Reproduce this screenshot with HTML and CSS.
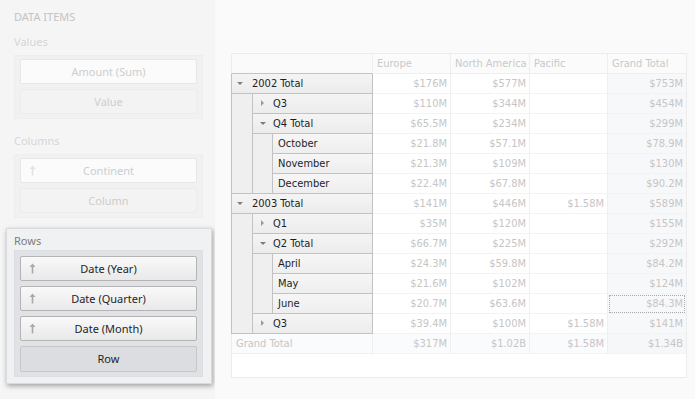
FILE: index.html
```html
<!DOCTYPE html>
<html lang="en">
  <head>
    <meta charset="UTF-8" />
    <title>Pivot - Data Items</title>
    <link rel="stylesheet" href="styles.css">
  </head>
  <body>
    <div class="app">
      <aside class="items-pane">
        <div class="pane-title">DATA ITEMS</div>

        <div class="section">
          <div class="section-label">Values</div>
          <div class="well">
            <div class="item">Amount (Sum)</div>
            <div class="item placeholder">Value</div>
          </div>
        </div>

        <div class="section">
          <div class="section-label">Columns</div>
          <div class="well">
            <div class="item"><span class="sort-icon"><svg width="7" height="11" viewBox="0 0 7 11"><path d="M3.5 0.5 L6.5 4 H4.3 V10.5 H2.7 V4 H0.5 Z" fill="currentColor"/></svg></span>Continent</div>
            <div class="item placeholder">Column</div>
          </div>
        </div>

        <div class="section active">
          <div class="section-label">Rows</div>
          <div class="well">
            <div class="item"><span class="sort-icon"><svg width="7" height="11" viewBox="0 0 7 11"><path d="M3.5 0.5 L6.5 4 H4.3 V10.5 H2.7 V4 H0.5 Z" fill="currentColor"/></svg></span>Date (Year)</div>
            <div class="item"><span class="sort-icon"><svg width="7" height="11" viewBox="0 0 7 11"><path d="M3.5 0.5 L6.5 4 H4.3 V10.5 H2.7 V4 H0.5 Z" fill="currentColor"/></svg></span>Date (Quarter)</div>
            <div class="item"><span class="sort-icon"><svg width="7" height="11" viewBox="0 0 7 11"><path d="M3.5 0.5 L6.5 4 H4.3 V10.5 H2.7 V4 H0.5 Z" fill="currentColor"/></svg></span>Date (Month)</div>
            <div class="item placeholder">Row</div>
          </div>
        </div>
      </aside>

      <main class="grid-area">
        <div class="pivot">
          <div class="row head">
            <div class="corner"></div>
            <div class="col-head">Europe</div>
            <div class="col-head">North America</div>
            <div class="col-head">Pacific</div>
            <div class="col-head total">Grand Total</div>
          </div>

          <!-- 2002 -->
          <div class="row">
            <div class="rh"><span class="lbl"><span class="toggle open"></span>2002 Total</span></div>
            <div class="cell">$176M</div><div class="cell">$577M</div><div class="cell"></div><div class="cell total">$753M</div>
          </div>
          <div class="row">
            <div class="rh"><span class="ind"></span><span class="lbl sub"><span class="toggle shut"></span>Q3</span></div>
            <div class="cell">$110M</div><div class="cell">$344M</div><div class="cell"></div><div class="cell total">$454M</div>
          </div>
          <div class="row">
            <div class="rh"><span class="ind"></span><span class="lbl sub"><span class="toggle open"></span>Q4 Total</span></div>
            <div class="cell">$65.5M</div><div class="cell">$234M</div><div class="cell"></div><div class="cell total">$299M</div>
          </div>
          <div class="row">
            <div class="rh"><span class="ind"></span><span class="ind sub"></span><span class="lbl leaf">October</span></div>
            <div class="cell">$21.8M</div><div class="cell">$57.1M</div><div class="cell"></div><div class="cell total">$78.9M</div>
          </div>
          <div class="row">
            <div class="rh"><span class="ind"></span><span class="ind sub"></span><span class="lbl leaf">November</span></div>
            <div class="cell">$21.3M</div><div class="cell">$109M</div><div class="cell"></div><div class="cell total">$130M</div>
          </div>
          <div class="row">
            <div class="rh"><span class="ind end"></span><span class="ind sub end"></span><span class="lbl leaf">December</span></div>
            <div class="cell">$22.4M</div><div class="cell">$67.8M</div><div class="cell"></div><div class="cell total">$90.2M</div>
          </div>

          <!-- 2003 -->
          <div class="row">
            <div class="rh"><span class="lbl"><span class="toggle open"></span>2003 Total</span></div>
            <div class="cell">$141M</div><div class="cell">$446M</div><div class="cell">$1.58M</div><div class="cell total">$589M</div>
          </div>
          <div class="row">
            <div class="rh"><span class="ind"></span><span class="lbl sub"><span class="toggle shut"></span>Q1</span></div>
            <div class="cell">$35M</div><div class="cell">$120M</div><div class="cell"></div><div class="cell total">$155M</div>
          </div>
          <div class="row">
            <div class="rh"><span class="ind"></span><span class="lbl sub"><span class="toggle open"></span>Q2 Total</span></div>
            <div class="cell">$66.7M</div><div class="cell">$225M</div><div class="cell"></div><div class="cell total">$292M</div>
          </div>
          <div class="row">
            <div class="rh"><span class="ind"></span><span class="ind sub"></span><span class="lbl leaf">April</span></div>
            <div class="cell">$24.3M</div><div class="cell">$59.8M</div><div class="cell"></div><div class="cell total">$84.2M</div>
          </div>
          <div class="row">
            <div class="rh"><span class="ind"></span><span class="ind sub"></span><span class="lbl leaf">May</span></div>
            <div class="cell">$21.6M</div><div class="cell">$102M</div><div class="cell"></div><div class="cell total">$124M</div>
          </div>
          <div class="row">
            <div class="rh"><span class="ind"></span><span class="ind sub end"></span><span class="lbl leaf">June</span></div>
            <div class="cell">$20.7M</div><div class="cell">$63.6M</div><div class="cell"></div><div class="cell total focus">$84.3M</div>
          </div>
          <div class="row">
            <div class="rh"><span class="ind end"></span><span class="lbl sub"><span class="toggle shut"></span>Q3</span></div>
            <div class="cell">$39.4M</div><div class="cell">$100M</div><div class="cell">$1.58M</div><div class="cell total">$141M</div>
          </div>

          <div class="row grand">
            <div class="grand-label">Grand Total</div>
            <div class="cell">$317M</div><div class="cell">$1.02B</div><div class="cell">$1.58M</div><div class="cell total">$1.34B</div>
          </div>
          <div class="filler"></div>
        </div>
      </main>
    </div>
  </body>
</html>
```

FILE: styles.css
```css
body {
  margin: 0;
  background-color: #f8f8f8;
  font-family: "Noto Sans", Arial, sans-serif;
  font-size: 11px;
}
.app {
  display: flex;
  height: 399px;
}

/* left pane */
.items-pane {
  width: 215px;
  padding: 10px 0 0 6px;
  box-sizing: border-box;
  background-color: #f5f5f5;
}
.pane-title {
  padding-left: 8px;
  line-height: 13px;
  color: #c4c4c4;
  margin-bottom: 12px;
}
.section {
  width: 189px;
  padding: 0 8px;
  margin-bottom: 15px;
}
.section-label {
  line-height: 13px;
  color: #d6d6d6;
  margin-bottom: 7px;
}
.well {
  display: flex;
  flex-direction: column;
  gap: 5px;
  padding: 3px 5px 4px;
  background-color: #f1f1f1;
  border: 1px solid #eeeeee;
}
.item {
  position: relative;
  height: 25px;
  line-height: 23px;
  box-sizing: border-box;
  text-align: center;
  color: #cdcdcd;
  background-color: #fbfbfb;
  border: 1px solid #e7e7e7;
  border-radius: 2px;
}
.item.placeholder {
  background-color: #f3f3f3;
  border-color: #ececec;
}
.sort-icon {
  position: absolute;
  left: 8px;
  top: 6px;
  color: #e2e2e2;
  line-height: 0;
}

/* highlighted section */
.section.active {
  width: 189px;
  margin: -5px 0 0;
  padding: 5px 8px 6px 7px;
  background-color: #f0f1f3;
  border: 1px solid #d9dadd;
  box-shadow: 1px 2px 5px rgba(0, 0, 0, 0.35);
}
.section.active .section-label {
  color: #7c7c7c;
  margin-bottom: 3px;
}
.section.active .well {
  padding: 5px 5px 4px;
  background-color: #e0e2e5;
  border-color: #dcdee1;
}
.section.active .item {
  color: #1f1f1f;
  background: linear-gradient(#f9f9f9, #e9e9e9);
  border-color: #b4b4b4;
}
.section.active .item.placeholder {
  background: #dcdde0;
  border-color: #c6c7ca;
  height: 26px;
}
.section.active .sort-icon {
  color: #a9a9a9;
}

/* pivot grid */
.grid-area {
  flex: 1;
  padding: 53px 0 0 16px;
  background-color: #fafafa;
}
.pivot {
  width: 455px;
  border: 1px solid #ececec;
  border-left: none;
  background-color: #fff;
  font-family: "DejaVu Sans Condensed", "DejaVu Sans", sans-serif;
  font-stretch: condensed;
  font-size: 11px;
}
.row {
  display: grid;
  grid-template-columns: 142px 78px 79px 78px 78px;
  height: 20px;
}
.corner {
  border-left: 1px solid #ececec;
  border-right: 1px solid #f0f0f0;
  border-bottom: 1px solid #c4c4c4;
  background-color: #fafafa;
}
.col-head {
  padding-left: 4px;
  line-height: 19px;
  white-space: nowrap;
  overflow: hidden;
  color: #c9c9c9;
  background-color: #fbfbfb;
  border-right: 1px solid #eeeeee;
  border-bottom: 1px solid #efefef;
}
.col-head.total {
  border-right: none;
}
.cell {
  box-sizing: border-box;
  padding-right: 3px;
  text-align: right;
  line-height: 19px;
  color: #c6c6c6;
  border-right: 1px solid #efefef;
  border-bottom: 1px solid #f3f3f3;
}
.cell.total {
  background-color: #f7f8fa;
  border-right: none;
}
.cell.focus {
  outline: 1px dotted #a9a9a9;
  outline-offset: -2px;
}

/* row headers */
.rh {
  display: flex;
  height: 20px;
  border-left: 1px solid #c2c2c2;
  border-right: 1px solid #c2c2c2;
  color: #1e1e1e;
}
.ind {
  width: 20px;
  box-sizing: border-box;
  background-color: #efefef;
}
.ind.sub {
  border-left: 1px solid #c2c2c2;
}
.ind.end {
  border-bottom: 1px solid #c2c2c2;
}
.lbl {
  flex: 1;
  display: flex;
  align-items: center;
  box-sizing: border-box;
  background: linear-gradient(#f4f4f4, #ececec);
  border-bottom: 1px solid #c2c2c2;
}
.lbl.sub {
  border-left: 1px solid #c2c2c2;
}
.lbl.leaf {
  padding-left: 5px;
  border-left: 1px solid #c2c2c2;
  background: linear-gradient(#f6f6f6, #eeeeee);
}
.toggle {
  width: 20px;
  height: 7px;
  position: relative;
}
.toggle::after {
  content: "";
  position: absolute;
  width: 0;
  height: 0;
}
.toggle.open::after {
  left: 5px;
  top: 2px;
  border-left: 3px solid transparent;
  border-right: 3px solid transparent;
  border-top: 3px solid #7e7e7e;
}
.lbl.sub .toggle.open::after {
  left: 7px;
}
.toggle.shut::after {
  left: 8px;
  top: 0;
  border-top: 3.5px solid transparent;
  border-bottom: 3.5px solid transparent;
  border-left: 3px solid #9a9a9a;
}

.grand .cell {
  background-color: #fafbfc;
}
.grand .cell.total {
  background-color: #f6f7f9;
}
.grand-label {
  padding-left: 4px;
  line-height: 19px;
  color: #c6c6c6;
  background-color: #fafbfc;
  border-left: 1px solid #ececec;
  border-right: 1px solid #efefef;
  border-bottom: 1px solid #f0f0f0;
}
.filler {
  height: 23px;
  border-left: 1px solid #ececec;
}
```
